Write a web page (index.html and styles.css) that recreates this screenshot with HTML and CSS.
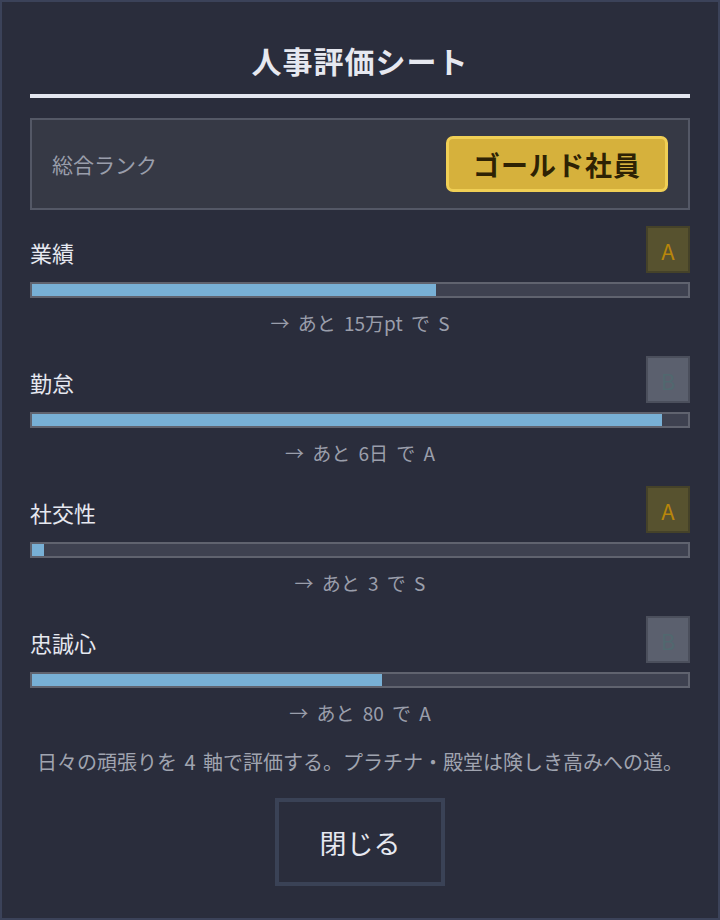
FILE: index.html
```html
<!DOCTYPE html>
<html lang="ja">
  <head>
    <meta charset="UTF-8" />
    <meta name="viewport" content="width=device-width, initial-scale=1.0" />
    <title>人事評価シート</title>
    <link rel="stylesheet" href="styles.css">
  </head>
  <body>
    <div class="sheet">
      <h1 class="title">人事評価シート</h1>

      <div class="rank">
        <span class="rank-label">総合ランク</span>
        <span class="rank-badge">ゴールド社員</span>
      </div>

      <div class="stats">
        <div class="stat">
          <div class="stat-head">
            <span class="stat-name">業績</span>
            <span class="grade grade-a">A</span>
          </div>
          <div class="bar"><div class="fill" style="width: 61.6%"></div></div>
          <div class="hint">→ あと 15万pt で S</div>
        </div>

        <div class="stat">
          <div class="stat-head">
            <span class="stat-name">勤怠</span>
            <span class="grade grade-b">B</span>
          </div>
          <div class="bar"><div class="fill" style="width: 96%"></div></div>
          <div class="hint">→ あと 6日 で A</div>
        </div>

        <div class="stat">
          <div class="stat-head">
            <span class="stat-name">社交性</span>
            <span class="grade grade-a">A</span>
          </div>
          <div class="bar"><div class="fill" style="width: 1.8%"></div></div>
          <div class="hint">→ あと 3 で S</div>
        </div>

        <div class="stat">
          <div class="stat-head">
            <span class="stat-name">忠誠心</span>
            <span class="grade grade-b">B</span>
          </div>
          <div class="bar"><div class="fill" style="width: 53.4%"></div></div>
          <div class="hint">→ あと 80 で A</div>
        </div>
      </div>

      <p class="note">日々の頑張りを 4 軸で評価する。プラチナ・殿堂は険しき高みへの道。</p>

      <div class="actions">
        <button class="close-btn">閉じる</button>
      </div>
    </div>
  </body>
</html>
```

FILE: styles.css
```css
* {
  box-sizing: border-box;
}

body {
  margin: 0;
  background: #2a2d3c;
  font-family: "Noto Sans CJK JP", "Noto Sans", sans-serif;
  color: #e6e8f0;
}

.sheet {
  width: 720px;
  height: 920px;
  border: 2px solid #3b4259;
  background: #2a2d3c;
  padding: 0 28px;
}

.title {
  margin: 0;
  padding-top: 38px;
  padding-bottom: 14px;
  line-height: 40px;
  font-size: 30px;
  font-weight: bold;
  letter-spacing: 1px;
  text-align: center;
  color: #e6e8f0;
  border-bottom: 4px solid #e4e6f0;
}

.rank {
  margin-top: 20px;
  height: 92px;
  display: flex;
  align-items: center;
  justify-content: space-between;
  padding: 0 20px;
  background: #363945;
  border: 2px solid #545866;
}

.rank-label {
  font-size: 21px;
  color: #9a9eab;
}

.rank-badge {
  display: flex;
  align-items: center;
  justify-content: center;
  width: 222px;
  height: 56px;
  background: #d6b13c;
  border: 3px solid #f0cf55;
  border-radius: 7px;
  font-size: 27px;
  font-weight: bold;
  letter-spacing: 1px;
  color: #2e2204;
}

.stats {
  display: flex;
  flex-direction: column;
  gap: 20px;
  margin-top: 16px;
}

.stat-head {
  display: flex;
  align-items: center;
  justify-content: space-between;
  height: 47px;
}

.stat-name {
  font-size: 22px;
  padding-top: 4px;
  color: #e6e8f0;
}

.grade {
  display: flex;
  align-items: center;
  justify-content: center;
  width: 44px;
  height: 47px;
  border: 2px solid;
  font-size: 22px;
}

.grade-a {
  background: #57522f;
  border-color: #454229;
  color: #b8860b;
}

.grade-b {
  background: #5b606e;
  border-color: #4b4f5c;
  color: #51686f;
}

.bar {
  margin-top: 9px;
  height: 16px;
  background: #3e4150;
  border: 2px solid #60636f;
}

.fill {
  height: 100%;
  background: #78b0d6;
}

.hint {
  margin-top: 12px;
  line-height: 26px;
  font-size: 19px;
  word-spacing: 4px;
  text-align: center;
  color: #9a9eab;
}

.note {
  margin: 22px 0 0;
  line-height: 28px;
  font-size: 20px;
  word-spacing: 3px;
  text-align: center;
  color: #a0a4b0;
}

.actions {
  display: flex;
  justify-content: center;
  margin-top: 22px;
}

.close-btn {
  width: 170px;
  height: 88px;
  background: #2a2d3c;
  border: 4px solid #3a4256;
  font-family: "Noto Sans CJK JP", "Noto Sans", sans-serif;
  font-size: 27px;
  color: #e6e8f0;
  cursor: pointer;
}
```
